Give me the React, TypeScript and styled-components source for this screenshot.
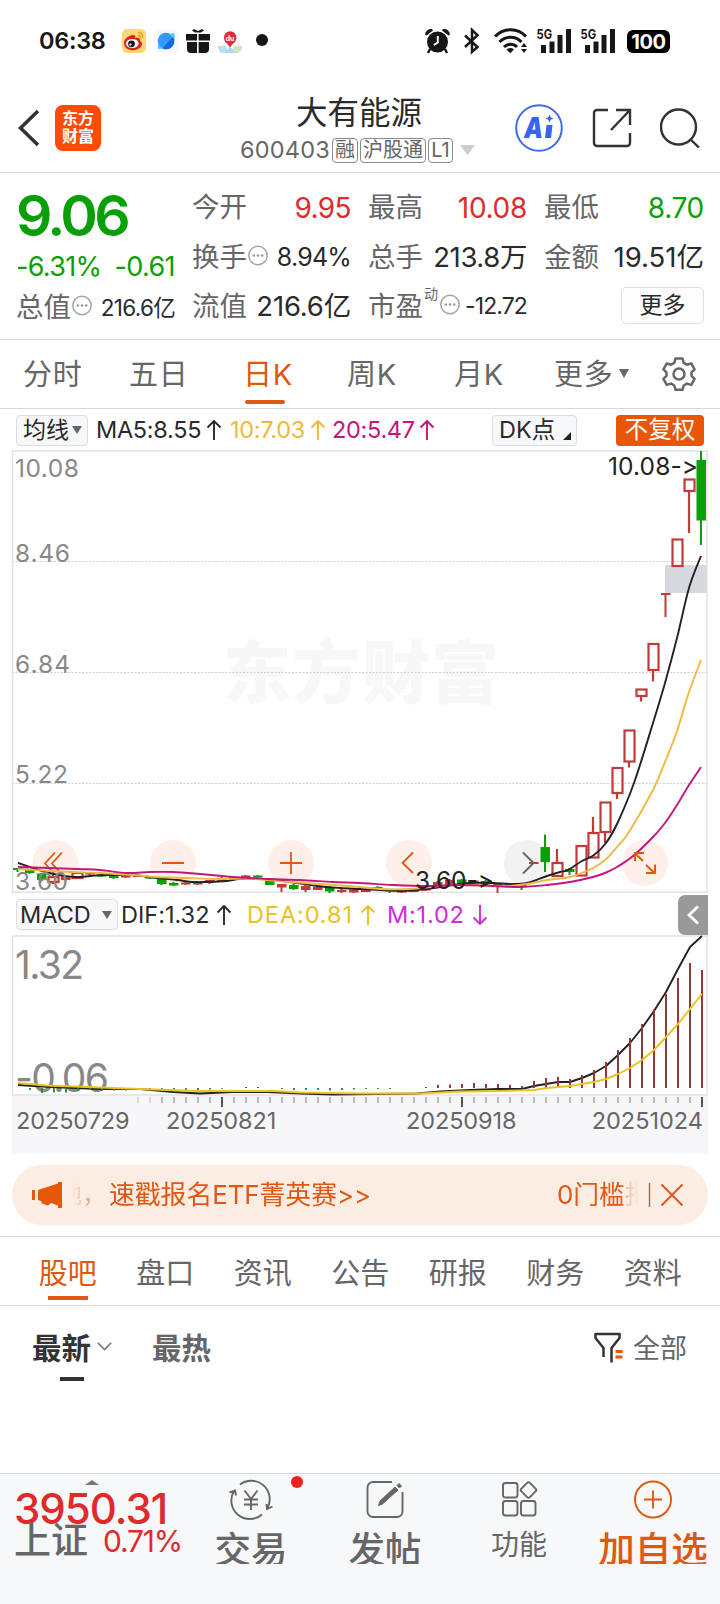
import React from "react";
import styled, { createGlobalStyle } from "styled-components";

const ORANGE = "#e0570f";
const GREEN = "#089f08";
const RED = "#df2a2c";
const DARK = "#2a2a2a";
const GREY = "#666666";
const LINE = "#d9d9d9";
const FONT = `Inter, "Noto Sans CJK SC", sans-serif`;

const Global = createGlobalStyle`
  * { box-sizing: border-box; }
  body { margin: 0; background: #fff; font-family: ${FONT}; font-feature-settings: "calt" 0; }
  svg { display: block; flex: none; }
`;

const Page = styled.div`
  width: 720px;
  height: 1604px;
  display: flex;
  flex-direction: column;
  background: #fff;
  overflow: hidden;
`;

const Txt = styled.span<{ $size: number; $color?: string; $weight?: number; $ls?: number }>`
  font-size: ${(p) => p.$size}px;
  color: ${(p) => p.$color ?? DARK};
  font-weight: ${(p) => p.$weight ?? 400};
  letter-spacing: ${(p) => p.$ls ?? 0}px;
  line-height: 1;
  white-space: nowrap;
`;

/* ---------- status bar ---------- */
const StatusBar = styled.div`
  height: 82px;
  padding: 0 50px 0 39px;
  display: flex;
  align-items: center;
  justify-content: space-between;
`;
const StatusLeft = styled.div`
  display: flex;
  align-items: center;
`;
const Clock = styled(Txt)`
  width: 82px;
`;
const Battery = styled.div`
  width: 43px;
  height: 23px;
  margin-left: 12px;
  border-radius: 6px;
  background: #000;
  color: #fff;
  font-size: 20px;
  font-weight: 700;
  letter-spacing: -0.4px;
  line-height: 24px;
  text-align: center;
`;

const AppIcons = () => (
  <svg width="148" height="28" viewBox="121 28 148 28">
    <rect x="122" y="30" width="24" height="24" rx="5" fill="#fcd873" />
    <path d="M124 44c0-4 5-8 9-8 2 0 3 1 2 3 3-1 6 0 5 3 3 1 3 6-2 8-7 3-14 0-14-6z" fill="#e02020" />
    <ellipse cx="132.3" cy="44.5" rx="6.4" ry="4.6" fill="#fff" />
    <circle cx="131.5" cy="44.8" r="3.4" fill="#1a1a1a" />
    <circle cx="130.4" cy="45.6" r="1.1" fill="#fff" />
    <path d="M138 33.500c3-.5 5.500 2 4.500 5.500M138 36.500c1.500 0 2.300 1 2 2.500" fill="none" stroke="#ef9a1c" strokeWidth="1.500" />
    <rect x="154" y="30" width="24" height="24" rx="5" fill="#f5f8fc" />
    <circle cx="166" cy="42" r="8.300" fill="#2f9bfa" />
    <path d="M174.300 36v5.500a8.300 8.300 0 0 1-12 7.900z" fill="#1268e8" />
    <path d="M169 35l5.500-1-.5 5.500z" fill="#63c4fb" />
    <path d="M158 45v5l5-.5z" fill="#54b8fc" />
    <path d="M186 35h11v6.500h-11zM198.600 35h11.400v6.500h-11.400zM187 43h10v11h-6a4 4 0 0 1-4-4v-7zM198.600 43h10.400v7a4 4 0 0 1-4 4h-6.400zM192 31.500l2-1.500 4 2 4-2 2 1.500-3 2h-6z" fill="#171717" />
    <path d="M218 47h8l3 7h-6c-3 0-5-3-5-7z" fill="#b8dff5" />
    <path d="M242 47h-8l-3 7h6c3 0 5-3 5-7z" fill="#cfe6b9" />
    <path d="M223 54l7-6 7 6z" fill="#a8dbf4" />
    <path d="M218 47h24l-5-2-7 3-7-3z" fill="#f2f6ee" />
    <path d="M230 49c-1-4-6-5-6-10.500a6.200 6.200 0 0 1 12.400 0c0 5.500-5.400 6.500-6.400 10.500z" fill="#df2f33" />
    <text x="225.700" y="41.500" fontSize="7" fontWeight="700" fill="#fff" fontFamily="Inter">du</text>
    <circle cx="262" cy="41" r="6" fill="#171717" />
  </svg>
);

const SystemIcons = () => (
  <svg width="191" height="28" viewBox="424 27 191 28">
    <g fill="#171717">
      <circle cx="437.500" cy="42" r="10.500" />
      <path d="M425 34.500a6 6 0 0 1 7-5.500l1 1.500-6.500 5zM450 34.500a6 6 0 0 0-7-5.500l-1 1.500 6.500 5z" />
      <path d="M430 49l-2 4M445 49l2 4" stroke="#171717" strokeWidth="2.400" />
      <path d="M437.800 36v6.500l-4 2.500" fill="none" stroke="#fff" strokeWidth="2" />
      <path d="M465 35.500l12.500 11.500-5.500 5V30l5.500 5.200L465 47" fill="none" stroke="#171717" strokeWidth="2.500" />
      <path d="M495 36.500a21 21 0 0 1 31 0M499.500 42a15 15 0 0 1 22 0M504 47a9 9 0 0 1 13 0" fill="none" stroke="#171717" strokeWidth="3" />
      <path d="M506.500 49.500a5.500 5.500 0 0 1 7.500 0l-3.800 3.700zM521 47l3-4 3 4zM521 49l3 4 3-4z" />
      {[0, 44].map((d) => (
        <g key={d} transform={`translate(${d} 0)`}>
          <rect x="541" y="45" width="5" height="8" />
          <rect x="549.500" y="41.500" width="5" height="11.500" />
          <rect x="557.500" y="35" width="5" height="18" />
          <rect x="566" y="29" width="5" height="24" />
          <text x="536.500" y="38.800" fontSize="13.500" fontWeight="700" fontFamily="Inter" textLength="15.500" lengthAdjust="spacingAndGlyphs">5G</text>
        </g>
      ))}
    </g>
  </svg>
);

/* ---------- title bar ---------- */
const TitleBar = styled.header`
  height: 91px;
  padding: 1px 19px 0 18px;
  display: flex;
  align-items: center;
  border-bottom: 1px solid ${LINE};
`;
const Logo = styled.div`
  width: 46px;
  height: 46px;
  margin-left: 16px;
  padding-top: 4px;
  border-radius: 8px;
  background: #ff4a08;
  color: #fff;
  font-size: 16px;
  font-weight: 700;
  line-height: 18.500px;
  text-align: center;
`;
const TitleBlock = styled.div`
  width: 240px;
  margin-left: 139px;
  display: flex;
  flex-direction: column;
  gap: 8px;
  padding-top: 5px;
`;
const StockName = styled(Txt)`
  padding-left: 56px;
  line-height: 32px;
`;
const SubLine = styled.div`
  display: flex;
  align-items: center;
  height: 27px;
`;
const Tag = styled.span<{ $w: number }>`
  width: ${(p) => p.$w}px;
  height: 25px;
  margin: 1px 0 0 2px;
  border: 1.500px solid #8a8a8a;
  border-radius: 4px;
  color: ${GREY};
  font-size: 20px;
  line-height: 22px;
  text-align: center;
  white-space: nowrap;
  flex: none;
`;
const HeaderActions = styled.div`
  display: flex;
  align-items: center;
  margin-left: 35px;
  gap: 28.500px;
`;

/* ---------- quote panel ---------- */
const Quote = styled.section`
  height: 167px;
  padding: 0 16px 0 16px;
  display: grid;
  grid-template-columns: 159px 158px 158px 159px;
  column-gap: 18px;
  border-bottom: 1px solid ${LINE};
`;
const QuoteCol = styled.div`
  display: grid;
  grid-template-rows: 49px 51px 47px;
  padding-top: 10px;
  margin-left: -1px;
`;
const Cell = styled.div`
  display: flex;
  align-items: center;
  justify-content: space-between;
`;
const PriceCol = styled.div`
  display: flex;
  flex-direction: column;
`;
const Price = styled(Txt)`
  height: 68px;
  padding-top: 14px;
`;
const PriceRow = styled.div<{ $h: number }>`
  height: ${(p) => p.$h}px;
  display: flex;
  align-items: center;
  justify-content: space-between;
`;
const Label = styled.span`
  display: flex;
  align-items: center;
  font-size: 27.500px;
  line-height: 1;
  color: ${GREY};
  white-space: nowrap;
  & > sup {
    font-size: 14px;
    line-height: 1;
    align-self: flex-start;
    margin: -6px 1px 0 1px;
  }
`;
const MoreButton = styled.button`
  width: 83px;
  height: 37px;
  margin: 0 0 3px auto;
  padding: 0;
  border: 1.500px solid #dfe0e2;
  border-radius: 5px;
  background: #fdfdfd;
  font: 400 23px/34px ${FONT};
  color: ${DARK};
`;

const Info = () => (
  <svg width="22" height="26" viewBox="0 0 22 26">
    <circle cx="11" cy="10.500" r="9.200" fill="none" stroke="#a5a5a5" strokeWidth="1.500" />
    <g fill="#999">
      <circle cx="6.800" cy="10.500" r="1.300" />
      <circle cx="11" cy="10.500" r="1.300" />
      <circle cx="15.200" cy="10.500" r="1.300" />
    </g>
  </svg>
);

/* ---------- period tabs ---------- */
const Periods = styled.nav`
  height: 69px;
  padding-left: 23px;
  display: flex;
  border-bottom: 1px solid ${LINE};
`;
const Period = styled.div<{ $w: number; $on?: boolean }>`
  width: ${(p) => p.$w}px;
  display: flex;
  align-items: center;
  font-size: 29px;
  letter-spacing: 0.700px;
  color: ${(p) => (p.$on ? ORANGE : GREY)};
`;
const PeriodText = styled.span`
  position: relative;
  line-height: 71px;
`;
const Underline = styled.i`
  position: absolute;
  left: 2px;
  bottom: 6px;
  width: 40px;
  height: 4px;
  border-radius: 2px;
  background: ${ORANGE};
`;
const Gear = () => (
  <svg width="36" height="36" viewBox="0 0 36 36" fill="none" stroke={GREY} strokeWidth="2.500" strokeLinejoin="round">
    <path d="M14.500 2.500h7l1.200 4.300 3.300 1.900 4.200-1.300 3.400 6-3.100 3v3.400l3.100 3.100-3.400 6-4.200-1.300-3.300 1.900-1.200 4.300h-7l-1.200-4.300-3.300-1.900-4.200 1.300-3.400-6 3.100-3.100v-3.400l-3.100-3 3.400-6 4.200 1.300 3.300-1.900z" />
    <circle cx="18" cy="18" r="5.500" />
  </svg>
);

/* ---------- indicator rows ---------- */
const IndicatorRow = styled.div<{ $h: number }>`
  height: ${(p) => p.$h}px;
  padding: 1px 12px 0 16px;
  display: flex;
  align-items: center;
`;
const Chip = styled.div<{ $w: number; $ml?: number }>`
  width: ${(p) => p.$w}px;
  height: 31px;
  margin-left: ${(p) => p.$ml ?? 0}px;
  padding: 0 5px 0 6px;
  display: flex;
  align-items: center;
  justify-content: space-between;
  border: 1px solid #dcdde0;
  border-radius: 4px;
  background: #f7f8fa;
  flex: none;
`;
const MacdChip = styled(Chip)`
  padding-left: 3px;
`;
const Adjust = styled.div`
  width: 88px;
  height: 31px;
  margin: 0 4px 0 auto;
  border-radius: 4px;
  background: #e85606;
  color: #fff;
  font-size: 23.500px;
  line-height: 30px;
  text-align: center;
`;
const Reading = styled.span<{ $w: number; $color: string; $ml?: number; $gap?: number; $ls?: number }>`
  width: ${(p) => p.$w}px;
  margin-left: ${(p) => p.$ml ?? 0}px;
  display: flex;
  align-items: center;
  gap: ${(p) => p.$gap ?? 5}px;
  font-size: 23.500px;
  line-height: 1;
  letter-spacing: ${(p) => p.$ls ?? -0.3}px;
  color: ${(p) => p.$color};
  white-space: nowrap;
  flex: none;
`;
const Collapse = styled.div`
  width: 30px;
  height: 40px;
  margin-left: auto;
  display: flex;
  align-items: center;
  justify-content: center;
  border-radius: 7px 0 0 7px;
  background: #999;
`;
const Arrow = ({ down }: { down?: boolean }) => (
  <svg width="16" height="20" viewBox="0 0 16 20" fill="none" stroke="currentColor" strokeWidth="1.900">
    <path d={down ? "M8 0v19M1.500 12.500L8 19l6.500-6.500" : "M8 20V1M1.500 7.500L8 1l6.500 6.500"} />
  </svg>
);
const Caret = () => (
  <svg width="10" height="10" viewBox="0 0 10 10">
    <path d="M0 1h10L5 9z" fill="#666" />
  </svg>
);

/* ---------- charts ---------- */
type Candle = [x: number, top: number, bottom: number, high: number, low: number, kind: "g" | "r" | "h"];
const candles: Candle[] = [
  [18, 868, 870, 868, 872, "g"], [30, 870, 873, 869, 874, "g"], [42, 873.500, 880, 873, 880, "g"],
  [54, 877, 882, 874, 884, "h"], [66, 876, 880, 876, 881, "r"], [78, 873, 878, 872, 879, "h"],
  [90, 872.500, 874.500, 872, 876, "r"], [102, 874.500, 876.500, 874, 877, "g"], [114, 876, 878, 875, 879, "g"],
  [126, 875.500, 877.500, 875, 878, "r"], [138, 875, 877, 875, 877, "r"], [150, 876.500, 878.500, 876, 879, "g"],
  [162, 878.500, 884, 878, 885, "g"], [174, 883, 885.500, 882, 886, "g"], [186, 882.500, 884.500, 881, 885, "r"],
  [198, 881.500, 884.500, 881, 885, "r"], [210, 880, 882.500, 880, 884, "r"], [222, 878, 881, 877, 882, "r"],
  [234, 877, 880, 876, 881, "r"], [246, 875.500, 878, 875, 879, "r"], [258, 875.500, 877.500, 875, 879, "g"],
  [270, 881, 885, 880, 885, "g"], [282, 884, 887.500, 884, 892, "r"], [294, 885, 889, 884, 890, "g"],
  [306, 886, 890, 885, 892, "r"], [318, 887, 890, 886, 890, "r"], [330, 887, 891.500, 886, 893, "g"],
  [342, 890, 892, 889, 893, "r"], [354, 889.500, 892.500, 889, 893, "r"], [366, 889, 892, 888, 892, "r"],
  [378, 887, 888.500, 886, 889, "g"], [390, 890, 891.500, 890, 893, "g"], [402, 891, 892.500, 891, 893.500, "r"],
  [414, 889, 892, 888, 892, "r"], [426, 888, 890.500, 888, 891, "r"], [438, 882, 885, 881, 886, "r"],
  [450, 880, 885, 879, 885, "r"], [462, 879.500, 884.500, 879, 885, "g"], [474, 880.500, 883, 880, 884, "r"],
  [486, 881, 884.500, 880, 885, "g"], [498, 884, 886, 883, 893, "r"], [510, 883.500, 885, 883, 886, "g"],
  [522, 885, 887, 884, 890, "g"], [534, 862, 864, 862, 864, "r"], [545.500, 847, 862, 834.500, 872, "g"],
  [558, 863, 876, 849, 876, "h"], [570, 869, 872, 868, 875, "g"], [582, 846, 875.500, 845, 876, "h"],
  [594, 833, 857.500, 817, 858, "h"], [606, 802.500, 832, 802, 843, "h"], [618, 768, 793, 768, 799, "h"],
  [630, 730.500, 761.500, 730, 767.500, "h"], [642, 689.500, 696, 689, 701.500, "h"], [654, 644, 670, 644, 681.500, "h"],
  [666, 593, 595, 593, 617, "r"], [678, 539.500, 566, 539, 567, "h"], [690, 479.500, 491, 479, 533, "h"],
  [701.500, 460, 520.500, 451, 545, "g"],
];
const ma5 = "18,863 42,871 54,874 74,877 90,876 103,875 117,875 133,875 157,878 177,880 193,882 207,882 227,881 240,879 267,879 290,882 317,886 340,888 360,889 380,890 403,891 427,889 447,886 470,883 493,883 510,884 527,883 547,876 560,872 568,870 582,861 594,855 606,843 617,824 634,783 653,723 665,683 677,638 689,588 701,556";
const ma10 = "18,869 50,871 73,872 100,873 133,875 157,877 187,878 217,879 253,879 290,882 320,884 360,887 380,889 410,889 440,886 470,885 503,886 527,884 547,880 570,877 593,868 605,860 617,847 629,832 653,790 665,762 677,731 689,692 701,660";
const ma20 = "18,867 77,869 100,870 127,873 150,872 173,872 200,874 233,877 267,879 300,880 333,882 360,883 393,885 427,886 460,885 493,886 520,887 547,885 570,882 593,877 605,873 617,867 633,856 653,837 665,823 677,805 689,785 701,767";

/** Turns a point list into a smooth path through every point. */
function smooth(list: string): string {
  const p = list.split(" ").map((s) => s.split(",").map(Number));
  let d = `M${p[0][0]} ${p[0][1]}`;
  for (let i = 0; i < p.length - 1; i++) {
    const a = p[Math.max(i - 1, 0)];
    const b = p[i];
    const c = p[i + 1];
    const e = p[Math.min(i + 2, p.length - 1)];
    d += `C${b[0] + (c[0] - a[0]) / 6} ${b[1] + (c[1] - a[1]) / 6} ${c[0] - (e[0] - b[0]) / 6} ${c[1] - (e[1] - b[1]) / 6} ${c[0]} ${c[1]}`;
  }
  return d;
}

const macdUp: [number, number][] = [
  [426, 1087], [438, 1085], [450, 1084.500], [462, 1084], [474, 1083], [486, 1084], [498, 1084], [510, 1085],
  [522, 1086], [534, 1081], [546, 1078], [558, 1077], [570, 1079], [582, 1075], [594, 1070], [606, 1062],
  [618, 1050], [630, 1038], [642, 1024], [654, 1009.500], [666, 994], [678, 978], [690, 963], [702, 970],
  [246, 1087], [258, 1087],
];
const macdDown: [number, number][] = [
  [30, 1090], [42, 1093], [54, 1092.500], [66, 1092.500], [78, 1091], [90, 1090], [102, 1090.500], [114, 1090.500],
  [126, 1090.500], [138, 1089], [150, 1090.500], [162, 1091.500], [174, 1092], [186, 1091], [198, 1090.500],
  [210, 1089.500], [222, 1088.700], [282, 1089], [294, 1090], [306, 1090], [318, 1090], [330, 1090.500],
  [342, 1090], [354, 1089.500], [366, 1089], [378, 1089], [390, 1089],
];
const dif = "18,1085 50,1087 100,1089 140,1089 173,1092 200,1093.500 233,1092 267,1092 300,1093.500 333,1094.500 417,1093.500 440,1091.500 470,1090 498,1089 522,1089 534,1086 558,1082 570,1082 582,1078 594,1073 606,1066 618,1055 630,1043 642,1028 654,1011 666,992 678,969 690,947 702,936";
const dea = "18,1083 47,1085.500 100,1087.500 140,1089 197,1091 273,1091 300,1092.500 360,1093.500 420,1093.500 460,1091.500 500,1091 534,1090 547,1088 570,1086 594,1082 606,1079 618,1074 630,1068 642,1060 654,1050 666,1037 678,1024 690,1009 702,994";

const Candles = () => (
  <svg width="720" height="443" viewBox="0 450 720 443" fontFamily={FONT}>
    <text x="223" y="698" fontSize="68" fontWeight="900" fill="#f7f7f7" textLength="276">东方财富</text>
    {[561.500, 672.500, 783.500].map((y) => (
      <line key={y} x1="12" x2="707" y1={y} y2={y} stroke="#cfcfcf" strokeDasharray="2 1.500" />
    ))}
    <rect x="665" y="565" width="42" height="28" fill="#d5d8dd" />
    {[55.500, 173, 291, 409, 527, 645].map((x) => (
      <circle key={x} cx={x} cy="863" r="23" fill={x === 527 ? "#f2f2f2" : "#fef0e8"} />
    ))}
    <path d="M12.500 893V451H707v442" fill="none" stroke="#e2e2e2" strokeWidth="1.500" />
    <path d="M12 892.500h696" stroke="#e2e2e2" strokeWidth="2" />
    <g fill="none" stroke={ORANGE} strokeWidth="1.800">
      <path d="M55 852.500L45 863.500l10 11M62 852.500L52 863.500l10 11" />
      <path d="M162 863h22M280 863h22M291 852v22M413 852.500l-10.500 10.500L413 873" />
    </g>
    {candles.map(([x, top, bottom, high, low, kind]) => {
      const c = kind === "g" ? GREEN : "#c23a3a";
      return kind === "h" ? (
        <g key={x} stroke={c} strokeWidth="2.200" fill="none">
          <path d={`M${x - 1} ${high}V${top}M${x - 1} ${bottom}V${low}`} />
          <rect x={x - 5.500} y={top} width="10" height={bottom - top} />
        </g>
      ) : (
        <g key={x} fill={c}>
          <rect x={x - 5} y={top} width="9.500" height={bottom - top} />
          <rect x={x - 1.500} y={high} width="2" height={low - high} />
        </g>
      );
    })}
    <g fill="none" strokeWidth="1.900" strokeLinejoin="round">
      <path d={smooth(ma5)} stroke="#222" />
      <path d={smooth(ma10)} stroke="#f0b840" />
      <path d={smooth(ma20)} stroke="#c4157c" />
      <path d="M523 852.500l10.500 10.500L523 873.500" stroke="#666" />
      <path d="M635 861v-8h9M634.500 853l8.500 8M655 873.500v-8M655 864.500v8.500h-9M654.500 873l-8.500-8" stroke="#e85606" strokeWidth="2" />
    </g>
    <g fontSize="24.500" fill="#888">
      <text x="15" y="477" textLength="64">10.08</text>
      <text x="15" y="562" textLength="55">8.46</text>
      <text x="15" y="673" textLength="55">6.84</text>
      <text x="15" y="783" textLength="53">5.22</text>
      <text x="15" y="890" textLength="53">3.60</text>
    </g>
    <g fontSize="24.500" fill="#222">
      <text x="608" y="475" textLength="90">10.08-&gt;</text>
      <text x="415" y="889" textLength="79">3.60-&gt;</text>
    </g>
  </svg>
);

const Macd = () => (
  <svg width="720" height="161" viewBox="0 935 720 161" fontFamily={FONT}>
    <path d="M12.500 1095V936H707v159z" fill="none" stroke="#e2e2e2" strokeWidth="1.500" />
    <g fontSize="39" fill="#888">
      <text x="15" y="979" textLength="69">1.32</text>
      <text x="15" y="1092" textLength="94">-0.06</text>
    </g>
    <g fill="none" strokeWidth="1.900" strokeLinejoin="round">
      <polyline points={dif} stroke="#222" />
      {macdUp.map(([x, y]) => <line key={x} x1={x} x2={x} y1={y} y2="1088" stroke="#8e3a38" strokeWidth="2" />)}
      {macdDown.map(([x, y]) => <line key={x} x1={x} x2={x} y1="1088" y2={y} stroke="#1d8a1d" strokeWidth="1.800" />)}
      <polyline points={dea} stroke="#eec21c" />
    </g>
  </svg>
);

const Axis = styled.div`
  width: 696px;
  height: 57px;
  margin-left: 12px;
  background: #f7f7f9;
`;
const Dates = styled.div`
  display: grid;
  grid-template-columns: 150px 240px 1fr auto;
  padding: 0 5px 0 4px;
`;
const Ticks = () => (
  <svg width="696" height="13" viewBox="12 1096 696 13">
    {Array.from({ length: 48 }, (_, i) => 702 - i * 12).map((x) => {
      const major = x === 702 || x === 462 || x === 222;
      return (
        <line key={x} x1={x} x2={x} y1="1097" y2={major ? 1107 : 1103} stroke={major ? "#555" : "#aaa"}
          strokeWidth={major ? 2 : 1.600} opacity={x < 162 ? 0.5 : 1} />
      );
    })}
  </svg>
);

/* ---------- banner ---------- */
const Banner = styled.div`
  width: 696px;
  height: 60px;
  margin: 12px 0 11px 12px;
  padding: 0 24px 0 19px;
  display: flex;
  align-items: center;
  justify-content: space-between;
  border-radius: 30px;
  background: #fcede4;
  flex: none;
`;
const Ticker = styled.div`
  width: 567px;
  display: flex;
  align-items: center;
  overflow: hidden;
  font-size: 25.800px;
  line-height: 36px;
  color: ${ORANGE};
  white-space: nowrap;
  mask-image: linear-gradient(90deg, transparent 0, rgba(0,0,0,.3) 10px, rgba(0,0,0,.6) 24px, #000 34px, #000 calc(100% - 18px), rgba(0,0,0,.3) calc(100% - 12px), transparent 100%);
`;
const TickerLead = styled.span`
  width: 37px;
  margin-left: -14px;
  font-size: 24px;
  flex: none;
`;
const TickerMain = styled.span`
  width: 462px;
  padding-left: 14px;
  flex: none;
`;

/* ---------- section tabs ---------- */
const Sections = styled.nav`
  height: 70px;
  padding: 0 19px;
  display: grid;
  grid-template-columns: repeat(7, 97.500px);
  border-top: 1px solid ${LINE};
  border-bottom: 1px solid ${LINE};
`;
const Section = styled.div<{ $on?: boolean }>`
  font-size: 29px;
  line-height: 74px;
  text-align: center;
  color: ${(p) => (p.$on ? ORANGE : GREY)};
  background: ${(p) => (p.$on ? `linear-gradient(${ORANGE}, ${ORANGE}) 50% 59px / 40px 4px no-repeat` : "none")};
`;
const SortBar = styled.div`
  height: 167px;
  padding: 0 33px 0 32px;
  display: flex;
  align-items: flex-start;
`;
const SortItem = styled.div<{ $on?: boolean; $w: number }>`
  width: ${(p) => p.$w}px;
  height: 76px;
  display: flex;
  align-items: center;
  gap: 6px;
  padding-top: 4px;
  font-size: 29.500px;
  font-weight: 700;
  color: ${(p) => (p.$on ? "#333" : GREY)};
  background: ${(p) => (p.$on ? "linear-gradient(#333, #333) 28px 71px / 24px 4px no-repeat" : "none")};
`;
const Filter = styled.div`
  height: 76px;
  margin-left: auto;
  padding-top: 8px;
  display: flex;
  align-items: center;
  gap: 10px;
`;

/* ---------- bottom bar ---------- */
const BottomBar = styled.footer`
  height: 131px;
  display: flex;
  border-top: 1px solid ${LINE};
  background: #f7f8fa;
`;
const IndexBox = styled.div`
  width: 184px;
  padding: 6px 0 0 14px;
  display: flex;
  flex-direction: column;
`;
const IndexCaret = styled.svg`
  margin: 0 0 3px 71px;
`;
const IndexRow = styled.div`
  display: flex;
  align-items: center;
  gap: 15px;
  margin-top: -8px;
`;
const NavItem = styled.div<{ $color?: string }>`
  position: relative;
  width: 134px;
  height: 90px;
  padding-top: 5px;
  display: flex;
  flex-direction: column;
  align-items: center;
  overflow: hidden;
  color: ${(p) => p.$color ?? GREY};
`;
const NavLabel = styled.span<{ $size: number; $lh: number; $weight?: number }>`
  font-size: ${(p) => p.$size}px;
  font-weight: ${(p) => p.$weight ?? 400};
  line-height: ${(p) => p.$lh}px;
  white-space: nowrap;
`;
const Dot = styled.i`
  position: absolute;
  left: 107px;
  top: 2px;
  width: 12px;
  height: 12px;
  border-radius: 50%;
  background: #f02020;
`;
const NavIcon = ({ children }: { children: React.ReactNode }) => (
  <svg width="44" height="42" viewBox="0 0 44 42" fill="none" stroke="currentColor" strokeWidth="1.900">{children}</svg>
);

export default function App() {
  return (
    <Page>
      <Global />
      <StatusBar>
        <StatusLeft>
          <Clock $size={23.500} $weight={600} $ls={-0.3} $color="#171717">06:38</Clock>
          <AppIcons />
        </StatusLeft>
        <StatusLeft>
          <SystemIcons />
          <Battery>100</Battery>
        </StatusLeft>
      </StatusBar>

      <TitleBar>
        <svg width="21" height="38" viewBox="0 0 21 38" fill="none" stroke="#333" strokeWidth="3.600">
          <path d="M20 2L2.500 19 20 36" />
        </svg>
        <Logo>东方<br />财富</Logo>
        <TitleBlock>
          <StockName $size={31.500}>大有能源</StockName>
          <SubLine>
            <Txt $size={23.500} $color={GREY} $ls={0.2}>600403</Txt>
            <Tag $w={26}>融</Tag>
            <Tag $w={66}>沪股通</Tag>
            <Tag $w={25}>L1</Tag>
            <svg width="22" height="10" viewBox="0 0 22 10"><path d="M7 0h15l-7.500 10z" fill="#ccc" /></svg>
          </SubLine>
        </TitleBlock>
        <HeaderActions>
          <svg width="48" height="48" viewBox="0 0 48 48">
            <circle cx="24" cy="24" r="22.800" fill="none" stroke="#3d6bea" strokeWidth="2" />
            <text x="9" y="34" fontSize="29" fontWeight="900" fill="#3464f0" fontFamily="Inter" fontStyle="italic" textLength="19" lengthAdjust="spacingAndGlyphs">A</text>
            <path d="M31.500 21h6l-1.500 13h-6zM34.500 10.500l1.200 2.800 2.800 1.200-2.800 1.200-1.200 2.800-1.200-2.800-2.800-1.200 2.800-1.200z" fill="#3464f0" />
          </svg>
          <svg width="40" height="40" viewBox="0 0 40 40" fill="none" stroke="#333" strokeWidth="2.400">
            <path d="M16 2H5a3 3 0 0 0-3 3v30a3 3 0 0 0 3 3h30a3 3 0 0 0 3-3V25M24 2h14v15M38 2L19 22" />
          </svg>
          <svg width="40" height="40" viewBox="0 0 40 40" fill="none" stroke="#333" strokeWidth="2.400">
            <circle cx="18.500" cy="19" r="17.500" />
            <path d="M30 31l9 8.500" />
          </svg>
        </HeaderActions>
      </TitleBar>

      <Quote>
        <PriceCol>
          <Price $size={57} $weight={600} $color={GREEN} $ls={-3.600}>9.06</Price>
          <PriceRow $h={50}>
            <Txt $size={27} $color={GREEN} $ls={-0.7}>-6.31%</Txt>
            <Txt $size={27} $color={GREEN} $ls={-0.600}>-0.61</Txt>
          </PriceRow>
          <PriceRow $h={34}>
            <Label>总值<Info /></Label>
            <Txt $size={22.500} $ls={-0.700}>216.6亿</Txt>
          </PriceRow>
        </PriceCol>
        <QuoteCol>
          <Cell><Label>今开</Label><Txt $size={28} $color={RED} $ls={-0.6}>9.95</Txt></Cell>
          <Cell><Label>换手<Info /></Label><Txt $size={25} $ls={-0.8}>8.94%</Txt></Cell>
          <Cell><Label>流值</Label><Txt $size={27.500} $ls={-0.2}>216.6亿</Txt></Cell>
        </QuoteCol>
        <QuoteCol>
          <Cell><Label>最高</Label><Txt $size={28} $color={RED} $ls={-0.300}>10.08</Txt></Cell>
          <Cell><Label>总手</Label><Txt $size={27.500} $ls={-0.4}>213.8万</Txt></Cell>
          <Cell><Label>市盈<sup>动</sup><Info /></Label><Txt $size={23} $ls={-0.9}>-12.72</Txt></Cell>
        </QuoteCol>
        <QuoteCol>
          <Cell><Label>最低</Label><Txt $size={28} $color={GREEN} $ls={-0.3}>8.70</Txt></Cell>
          <Cell><Label>金额</Label><Txt $size={27.500} $ls={0}>19.51亿</Txt></Cell>
          <Cell><MoreButton>更多</MoreButton></Cell>
        </QuoteCol>
      </Quote>

      <Periods>
        <Period $w={106}><PeriodText>分时</PeriodText></Period>
        <Period $w={114}><PeriodText>五日</PeriodText></Period>
        <Period $w={104} $on><PeriodText>日K<Underline /></PeriodText></Period>
        <Period $w={107}><PeriodText>周K</PeriodText></Period>
        <Period $w={100}><PeriodText>月K</PeriodText></Period>
        <Period $w={107}><PeriodText>更多</PeriodText><svg width="16" height="10" viewBox="0 0 16 10"><path d="M6 0h10l-5 9z" fill="#666" /></svg></Period>
        <Period $w={40}><Gear /></Period>
      </Periods>

      <IndicatorRow $h={41}>
        <Chip $w={72}><Txt $size={23}>均线</Txt><Caret /></Chip>
        <Reading $w={134} $ml={8} $color={DARK}>MA5:8.55 <Arrow /></Reading>
        <Reading $w={102} $color="#f0b840">10:7.03 <Arrow /></Reading>
        <Reading $w={110} $color="#c4157c" $gap={4}>20:5.47 <Arrow /></Reading>
        <Chip $w={85} $ml={50}>
          <Txt $size={23.500}>DK点</Txt>
          <svg width="8" height="22" viewBox="0 0 8 22"><path d="M8 13v8H0z" fill="#222" /></svg>
        </Chip>
        <Adjust>不复权</Adjust>
      </IndicatorRow>
      <Candles />
      <IndicatorRow $h={42}>
        <MacdChip $w={102}><Txt $size={23.500} $ls={0}>MACD</Txt><Caret /></MacdChip>
        <Reading $w={126} $ml={3} $gap={7} $ls={0} $color={DARK}>DIF:1.32 <Arrow /></Reading>
        <Reading $w={140} $gap={7} $ls={0.9} $color="#ecc022">DEA:0.81 <Arrow /></Reading>
        <Reading $w={110} $gap={7} $ls={0.8} $color="#cf2bdb">M:1.02 <Arrow down /></Reading>
        <Collapse>
          <svg width="12" height="20" viewBox="0 0 12 20" fill="none" stroke="#fff" strokeWidth="2.800"><path d="M11 1.500L2 10l9 8.500" /></svg>
        </Collapse>
      </IndicatorRow>
      <Macd />
      <Axis>
        <Ticks />
        <Dates>
          {["20250729", "20250821", "20250918", "20251024"].map((d, i) => (
            <Txt key={d} $size={23.500} $color={GREY} $ls={i === 3 ? 0 : -0.1}>{d}</Txt>
          ))}
        </Dates>
      </Axis>

      <Banner>
        <svg width="32" height="28" viewBox="0 0 32 28" fill="#e85606">
          <path d="M1 9h3v10H1zM7 9l20-6.500V1h4v26h-4v-2.500L20 22l-3 2.500-6-2-1-2.500-3-1z" />
        </svg>
        <Ticker>
          <TickerLead>地，</TickerLead>
          <TickerMain>速戳报名ETF菁英赛&gt;&gt;</TickerMain>
          <span>0门槛报名</span>
        </Ticker>
        <svg width="36" height="26" viewBox="0 0 36 26" fill="none" stroke={ORANGE} strokeWidth="1.900">
          <path d="M1.500 1v24" stroke="#b8642c" strokeWidth="1.400" />
          <path d="M13.500 2.500l21 21M34.500 2.500l-21 21" />
        </svg>
      </Banner>

      <Sections>
        {["股吧", "盘口", "资讯", "公告", "研报", "财务", "资料"].map((s, i) => (
          <Section key={s} $on={i === 0}>{s}</Section>
        ))}
      </Sections>
      <SortBar>
        <SortItem $on $w={120}>
          最新
          <svg width="15" height="9" viewBox="0 0 15 9" fill="none" stroke="#777" strokeWidth="1.600"><path d="M.8 .8l6.700 6.700L14.200 .8" /></svg>
        </SortItem>
        <SortItem $w={80}>最热</SortItem>
        <Filter>
          <svg width="29" height="32" viewBox="0 0 29 32" fill="none" stroke="#333" strokeWidth="2.500" strokeLinejoin="round">
            <path d="M9.500 25V16L1.500 6V2h24v4l-8 10v14.500" />
            <path d="M21.500 19.500h7M21.500 25h7" stroke="#e85606" strokeWidth="2.800" />
          </svg>
          <Txt $size={27} $color={GREY}>全部</Txt>
        </Filter>
      </SortBar>

      <BottomBar>
        <IndexBox>
          <IndexCaret width="14" height="5" viewBox="0 0 14 5"><path d="M0 5h14L7 0z" fill="#777" /></IndexCaret>
          <Txt $size={42} $color={RED} $weight={500} $ls={-1}>3950.31</Txt>
          <IndexRow>
            <Txt $size={37} $color={GREY} $weight={500}>上证</Txt>
            <Txt $size={30} $color={RED} $ls={-1.2}>0.71%</Txt>
          </IndexRow>
        </IndexBox>
        <NavItem>
          <NavIcon>
            <path d="M11 5.500A18.500 18.500 0 0 1 38.500 29M33 35.500A18.500 18.500 0 0 1 5 12M.5 13.500L6 11.500l1 5M43.500 27.500L38 30l-.5-5" />
            <path d="M15.500 11.500L22 20l6.500-8.500M22 19v12M15 20.500h14M15 25.500h14" />
          </NavIcon>
          <NavLabel $size={36.500} $lh={58} $weight={500}>交易</NavLabel>
          <Dot />
        </NavItem>
        <NavItem>
          <NavIcon>
            <path d="M29 3H10a5.500 5.500 0 0 0-5.500 5.500v24A5.500 5.500 0 0 0 10 38h24a5.500 5.500 0 0 0 5.500-5.500V13" />
            <path d="M15.500 26.500l1.500-4.500L32 8l3 3-15.500 14zM34 6.500l2-2 2.500 2.500-2 2z" fill="currentColor" strokeWidth="1" />
          </NavIcon>
          <NavLabel $size={36.500} $lh={58} $weight={500}>发帖</NavLabel>
        </NavItem>
        <NavItem>
          <NavIcon>
            <rect x="6" y="4" width="14.500" height="14.500" rx="2.500" />
            <rect x="6" y="22" width="14.500" height="14.500" rx="2.500" />
            <rect x="24" y="22" width="14.500" height="14.500" rx="2.500" />
            <rect x="25.500" y="5" width="12" height="12" rx="2" transform="rotate(45 31.500 11)" />
          </NavIcon>
          <NavLabel $size={28} $lh={48}>功能</NavLabel>
        </NavItem>
        <NavItem $color={ORANGE}>
          <NavIcon>
            <circle cx="22" cy="20.500" r="18" />
            <path d="M13 20.500h18M22 11.500v18" />
          </NavIcon>
          <NavLabel $size={36.500} $lh={58} $weight={500}>加自选</NavLabel>
        </NavItem>
      </BottomBar>
    </Page>
  );
}
